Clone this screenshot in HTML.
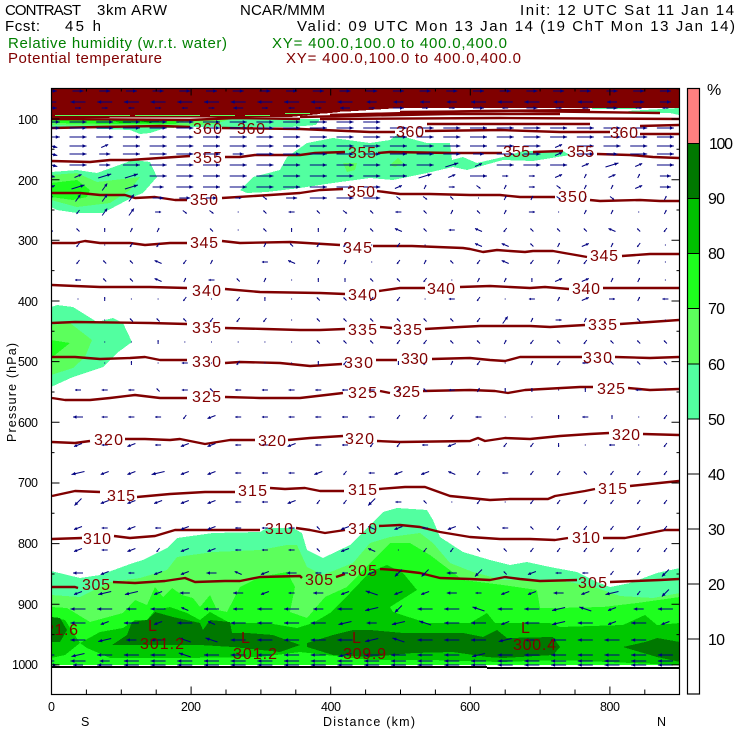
<!DOCTYPE html>
<html><head><meta charset="utf-8"><style>
html,body{margin:0;padding:0;background:#fff}
svg{display:block}
text{font-family:"Liberation Sans",sans-serif}
.h{font-size:15px;fill:#000}
.g{font-size:15px;fill:#008000}
.p{font-size:15px;fill:#800000}
.a{font-size:12.5px;fill:#000}
.c{font-size:16px;fill:#800000}
.b{font-size:16px;fill:#000}
polyline{fill:none;stroke:#800000;stroke-width:2.4;stroke-linejoin:round}
</style></head><body>
<svg width="740" height="740" viewBox="0 0 740 740" xmlns="http://www.w3.org/2000/svg">
<rect width="740" height="740" fill="#fff"/>
<text class="h" x="5" y="15" textLength="76">CONTRAST</text>
<text class="h" x="97" y="15" textLength="70">3km ARW</text>
<text class="h" x="240" y="15" textLength="85">NCAR/MMM</text>
<text class="h" x="520" y="15" textLength="214">Init: 12 UTC Sat 11 Jan 14</text>
<text class="h" x="5" y="31" textLength="35">Fcst:</text>
<text class="h" x="65" y="31" textLength="36">45 h</text>
<text class="h" x="297" y="31" textLength="438">Valid: 09 UTC Mon 13 Jan 14 (19 ChT Mon 13 Jan 14)</text>
<text class="g" x="8" y="48" textLength="219">Relative humidity (w.r.t. water)</text>
<text class="g" x="272" y="48" textLength="235">XY= 400.0,100.0 to 400.0,400.0</text>
<text class="p" x="8" y="63" textLength="154">Potential temperature</text>
<text class="p" x="286" y="63" textLength="235">XY= 400.0,100.0 to 400.0,400.0</text>

<defs><clipPath id="pl"><rect x="51" y="89" width="628" height="605"/></clipPath></defs>
<g clip-path="url(#pl)" shape-rendering="crispEdges">
<polygon fill="#52ffa0" points="51,571 80,578 100,575 133,563 143,560 167,548 177,538 213,533 260,532 267,528 293,528 302,533 307,550 323,558 350,545 370,525 383,512 397,508 427,510 433,520 440,537 463,552 490,560 510,565 527,562 550,567 577,572 597,582 610,587 630,583 657,573 680,568 680,665 51,665"/>
<polygon fill="#5cff5c" points="51,595 80,597 110,582 140,578 167,570 177,557 213,552 260,550 287,545 297,545 307,567 323,575 353,563 370,543 390,537 420,533 433,543 450,563 473,572 503,580 537,580 570,582 597,588 620,596 653,598 680,593 680,665 51,665"/>
<polygon fill="#1eff1e" points="51,607 67,608 90,622 123,613 135,600 147,605 155,587 163,597 172,588 182,595 193,598 200,607 210,595 217,610 227,612 240,587 260,577 287,572 295,587 290,612 307,618 325,597 347,587 370,563 390,543 410,543 430,555 463,580 503,585 537,590 540,608 557,608 603,607 637,603 680,597 680,665 51,665"/>
<polygon fill="#00c800" points="51,617 65,620 80,643 100,632 123,628 135,620 147,620 155,610 170,607 187,613 200,620 210,612 230,623 267,623 297,628 313,623 330,613 350,593 370,572 387,565 403,573 417,590 390,607 393,612 427,623 470,623 487,613 495,623 550,623 560,627 623,625 645,615 657,625 680,623 680,665 560,660 500,662 430,660 370,660 300,652 260,657 180,658 110,658 87,648 80,643 65,655 51,658"/>
<polygon fill="#007800" points="51,617 60,618 67,630 60,642 51,642"/>
<polygon fill="#007800" points="112,645 127,635 132,622 147,620 155,612 173,617 200,623 203,630 210,620 230,622 232,633 247,633 273,635 300,645 280,652 233,647 200,645 130,645"/>
<polygon fill="#007800" points="307,643 333,635 353,630 370,630 403,633 463,633 483,637 497,630 507,638 553,637 560,647 553,655 503,658 487,657 453,652 413,653 370,657 333,655 307,647"/>
<polygon fill="#007800" points="623,647 645,642 657,638 680,642 680,662 657,657 633,650"/>
<polygon fill="#52ffa0" points="51,307 57,305 73,307 97,322 113,318 123,323 132,342 117,353 103,367 73,377 51,387"/>
<polygon fill="#5cff5c" points="51,325 70,323 92,340 85,357 73,368 51,375"/>
<polygon fill="#1eff1e" points="51,340 70,343 55,355 51,358"/>
<polygon fill="#52ffa0" points="51,172 77,170 97,173 133,160 150,162 157,177 143,193 133,197 103,213 77,213 57,210 51,207"/>
<polygon fill="#5cff5c" points="51,175 77,173 97,182 140,177 130,190 110,203 77,207 51,200"/>
<polygon fill="#1eff1e" points="51,183 77,180 90,190 87,197 73,200 51,197"/>
<polygon fill="#52ffa0" points="240,190 253,177 280,170 287,157 307,143 333,138 370,143 390,140 397,135 427,143 450,143 452,160 463,157 477,163 503,157 523,151 563,151 570,155 533,161 503,160 467,170 453,167 427,173 393,180 370,178 333,183 300,188 267,192 247,193"/>
<polygon fill="#5cff5c" points="390,165 398,158 403,163 395,167"/>
<polygon fill="#5cff5c" points="343,163 357,163 355,170 347,172"/>
<polygon fill="#52ffa0" points="51,119 320,119 316,125 290,127 200,127 165,128 150,133 140,134 130,130 51,127"/>
<polygon fill="#5cff5c" points="51,119 230,119 215,124 180,126 110,126 51,125"/>
<polygon fill="#1eff1e" points="51,120 190,119 175,124 110,124 51,123"/>
<polygon fill="#00c800" points="110,120 170,120 165,122 120,123"/>
<polygon fill="#007800" points="140,121 160,121 150,123"/>
<rect x="592" y="107" width="45" height="2" fill="#52ffa0"/>
<polygon fill="#52ffa0" points="627,111 679,108 679,115 670,113 640,113"/>
<polygon fill="#800000" points="51,89 679,89 679,108 400,108 340,112 290,117 51,118"/>
<path d="M55 115.5H130M135 115.5H200M210 115.5H235M245 115.5H270M285 113.5H310" stroke="#5cff5c" stroke-width="1.4" fill="none"/>
<path d="M340 112H370M320 114H400M300 116.5H420" stroke="#fff" stroke-width="1" fill="none"/>
<g shape-rendering="auto">
<polyline points="52,119 190,120 235,118 300,119"/>
<polyline points="300,117 450,114 560,114"/>
<polyline points="330,115 480,111 590,110"/>
<polyline points="320,119 500,118 679,119"/>
<polyline points="400,112 520,111 660,113"/>
<polyline points="427,124 590,124"/>
<polyline points="52,128 100,127 160,126 190,127"/>
<polyline points="222,128 300,129 370,132 395,132"/>
<polyline points="425,131 500,130 560,132 610,132"/>
<polyline points="640,134 679,134"/>
<polyline points="640,126 679,125"/>
<polyline points="52,161 90,162 110,160 130,160 160,158 190,156"/>
<polyline points="225,157 240,157 255,155 300,155 315,153 345,152"/>
<polyline points="378,153 390,152 453,153 487,153 502,153"/>
<polyline points="533,152 563,151"/>
<polyline points="597,154 630,155 653,157 679,158"/>
<polyline points="52,193 80,193 100,195 125,195 135,198 155,197 175,200 187,200"/>
<polyline points="222,198 270,195 300,193 320,190 343,189"/>
<polyline points="377,191 400,194 430,194 470,195 500,195 520,197 555,197"/>
<polyline points="590,200 600,201 640,200 660,201 679,201"/>
<polyline points="52,243 75,243 85,241 100,243 130,243 145,245 170,243 187,243"/>
<polyline points="222,241 240,243 290,242 340,245"/>
<polyline points="373,246 412,246 463,248 470,249 483,252 497,250 510,251 525,252 533,251 553,251 570,254 587,257"/>
<polyline points="622,256 650,254 679,254"/>
<polyline points="52,285 75,286 100,287 150,287 187,288"/>
<polyline points="225,289 260,292 320,293 345,294"/>
<polyline points="379,291 400,288 425,288"/>
<polyline points="460,287 490,286 510,287 530,288 545,287 569,289"/>
<polyline points="603,288 630,288 679,288"/>
<polyline points="52,323 75,322 150,323 187,324"/>
<polyline points="225,328 265,329 300,330 320,330 345,329"/>
<polyline points="380,327 392,328"/>
<polyline points="425,329 460,327 480,326 530,326 550,327 585,325"/>
<polyline points="620,324 650,322 679,320"/>
<polyline points="52,357 75,357 100,359 130,358 145,357 160,360 187,360"/>
<polyline points="225,363 240,362 280,363 310,366 342,364"/>
<polyline points="376,360 397,360"/>
<polyline points="432,359 470,358 490,360 505,361 520,357 582,357"/>
<polyline points="615,357 650,358 679,357"/>
<polyline points="52,398 65,400 90,400 110,398 135,395 160,398 187,398"/>
<polyline points="225,397 260,398 300,398 343,393"/>
<polyline points="380,391 390,393"/>
<polyline points="423,391 470,390 495,391 508,393 525,390 580,387 593,387"/>
<polyline points="628,388 650,390 679,389"/>
<polyline points="52,442 75,443 90,441"/>
<polyline points="125,439 145,439 170,440 180,439 205,444 230,440 255,440"/>
<polyline points="288,440 310,438 343,436"/>
<polyline points="377,441 400,442 470,441 478,438 485,441 505,438 530,439 560,436 590,434 609,433"/>
<polyline points="643,434 679,435"/>
<polyline points="52,496 75,491 100,492"/>
<polyline points="137,497 170,494 205,492 235,492"/>
<polyline points="270,488 285,489 305,488 320,491 344,491"/>
<polyline points="379,489 405,487 425,487 450,496 470,498 490,500 510,499 530,499 548,499 555,496 585,491 595,489"/>
<polyline points="630,486 679,481"/>
<polyline points="52,539 82,538"/>
<polyline points="114,536 130,538 155,536 175,530 210,530 260,530"/>
<polyline points="296,528 310,530 325,533 345,530"/>
<polyline points="379,526 400,525 420,527 440,532 470,537 500,539 530,539 555,540 568,538"/>
<polyline points="603,538 625,538 650,533 665,530 679,530"/>
<polyline points="52,587 75,587 78,588"/>
<polyline points="113,582 135,583 165,581 185,578 195,582 225,581 240,581 260,577 300,576 302,578"/>
<polyline points="336,577 345,574"/>
<polyline points="380,569 395,570 420,573 440,578 470,579 490,580 505,577 520,579 540,581 577,580"/>
<polyline points="610,582 635,581 660,580 679,579"/>
</g>
<path id="ars" fill="none" stroke="#000080" stroke-width="1" shape-rendering="auto"/>
<path id="arh" fill="#000080" stroke="none" shape-rendering="auto"/>
</g>

<g>
<text class="c" x="193" y="134" textLength="29">360</text><text class="c" x="237" y="134" textLength="28">360</text><text class="c" x="396" y="137" textLength="28">360</text><text class="c" x="610" y="138" textLength="28">360</text>
<text class="c" x="193" y="163" textLength="29">355</text><text class="c" x="348" y="158" textLength="28">355</text><text class="c" x="503" y="157" textLength="27">355</text><text class="c" x="567" y="157" textLength="27">355</text>
<text class="c" x="190" y="205" textLength="28">350</text><text class="c" x="347" y="197" textLength="28">350</text><text class="c" x="558" y="202" textLength="29">350</text>
<text class="c" x="190" y="248" textLength="28">345</text><text class="c" x="343" y="253" textLength="29">345</text><text class="c" x="590" y="261" textLength="28">345</text>
<text class="c" x="192" y="296" textLength="29">340</text><text class="c" x="348" y="300" textLength="29">340</text><text class="c" x="427" y="294" textLength="28">340</text><text class="c" x="572" y="294" textLength="28">340</text>
<text class="c" x="192" y="333" textLength="29">335</text><text class="c" x="348" y="335" textLength="29">335</text><text class="c" x="393" y="335" textLength="29">335</text><text class="c" x="588" y="330" textLength="29">335</text>
<text class="c" x="192" y="367" textLength="29">330</text><text class="c" x="344" y="368" textLength="29">330</text><text class="c" x="401" y="364" textLength="27">330</text><text class="c" x="583" y="363" textLength="29">330</text>
<text class="c" x="192" y="402" textLength="29">325</text><text class="c" x="348" y="398" textLength="29">325</text><text class="c" x="393" y="397" textLength="27">325</text><text class="c" x="597" y="394" textLength="28">325</text>
<text class="c" x="94" y="445" textLength="29">320</text><text class="c" x="258" y="446" textLength="28">320</text><text class="c" x="345" y="444" textLength="29">320</text><text class="c" x="612" y="440" textLength="28">320</text>
<text class="c" x="107" y="501" textLength="28">315</text><text class="c" x="238" y="496" textLength="29">315</text><text class="c" x="348" y="495" textLength="29">315</text><text class="c" x="598" y="494" textLength="29">315</text>
<text class="c" x="83" y="544" textLength="28">310</text><text class="c" x="265" y="534" textLength="28">310</text><text class="c" x="348" y="534" textLength="29">310</text><text class="c" x="572" y="543" textLength="28">310</text>
<text class="c" x="82" y="590" textLength="28">305</text><text class="c" x="305" y="585" textLength="28">305</text><text class="c" x="348" y="576" textLength="29">305</text><text class="c" x="578" y="588" textLength="29">305</text>
<text class="c" x="148" y="631">L</text><text class="c" x="140" y="649" textLength="44">301.2</text>
<svg x="51" y="620" width="40" height="20"><text class="c" x="-6" y="15" textLength="33">21.6</text></svg>
<text class="c" x="241" y="643">L</text><text class="c" x="233" y="659" textLength="44">301.2</text>
<text class="c" x="352" y="643">L</text><text class="c" x="343" y="659" textLength="43">309.9</text>
<text class="c" x="521" y="633">L</text><text class="c" x="513" y="650" textLength="43">300.4</text>
</g>

<path d="M51 667H487M487 668H679" stroke="#000" stroke-width="2" fill="none"/>
<rect x="51.5" y="88.5" width="628" height="606" fill="none" stroke="#000" stroke-width="1.2"/>
<path id="tk" stroke="#000" stroke-width="1" fill="none"/>

<text class="a" x="18" y="124" textLength="20">100</text>
<text class="a" x="18" y="185" textLength="20">200</text>
<text class="a" x="18" y="245" textLength="20">300</text>
<text class="a" x="18" y="306" textLength="20">400</text>
<text class="a" x="18" y="366" textLength="20">500</text>
<text class="a" x="18" y="427" textLength="20">600</text>
<text class="a" x="18" y="487" textLength="20">700</text>
<text class="a" x="18" y="548" textLength="20">800</text>
<text class="a" x="18" y="609" textLength="20">900</text>
<text class="a" x="12" y="669" textLength="26">1000</text>
<text class="a" x="48" y="711" textLength="7">0</text>
<text class="a" x="181" y="711" textLength="20">200</text>
<text class="a" x="321" y="711" textLength="20">400</text>
<text class="a" x="460" y="711" textLength="20">600</text>
<text class="a" x="600" y="711" textLength="20">800</text>
<text class="a" x="81" y="726" textLength="8">S</text>
<text class="a" x="323" y="726" textLength="92">Distance (km)</text>
<text class="a" x="657" y="726" textLength="9">N</text>
<text class="a" transform="translate(16,442) rotate(-90)" textLength="99">Pressure (hPa)</text>

<rect x="687.5" y="88.5" width="12" height="55" fill="#ff8080"/>
<rect x="687.5" y="143.5" width="12" height="55" fill="#007800"/>
<rect x="687.5" y="198.5" width="12" height="55" fill="#00c000"/>
<rect x="687.5" y="253.5" width="12" height="55" fill="#1eff1e"/>
<rect x="687.5" y="308.5" width="12" height="55" fill="#5cff5c"/>
<rect x="687.5" y="364" width="12" height="55" fill="#52ffa0"/>
<path d="M687.5 143.5H699.5M687.5 198.5H699.5M687.5 253.5H699.5M687.5 308.5H699.5M687.5 364H699.5M687.5 419H699.5M687.5 474H699.5M687.5 529H699.5M687.5 584H699.5M687.5 639H699.5" stroke="#000" fill="none" stroke-width="1"/>
<rect x="687.5" y="88.5" width="12" height="605.5" fill="none" stroke="#000" stroke-width="1.2"/>
<text class="b" x="707" y="95" textLength="12">%</text>
<text class="b" x="709" y="149" textLength="24">100</text>
<text class="b" x="708" y="204" textLength="17">90</text>
<text class="b" x="708" y="259" textLength="17">80</text>
<text class="b" x="708" y="314" textLength="17">70</text>
<text class="b" x="708" y="370" textLength="17">60</text>
<text class="b" x="708" y="425" textLength="17">50</text>
<text class="b" x="708" y="480" textLength="17">40</text>
<text class="b" x="708" y="535" textLength="17">30</text>
<text class="b" x="708" y="590" textLength="17">20</text>
<text class="b" x="708" y="645" textLength="17">10</text>
</svg>
<script>
(function(){
var D={R:[17,0],r:[11,0],s:[6,0],L:[-15,0],l:[-10,0],k:[-6,0],A:[-13,3],a:[-8,3],B:[-7,7],b:[-3,4],C:[5,-7],c:[2,-4],D:[13,-4],d:[7,-3],E:[12,3],e:[7,2],F:[8,6],f:[4,3],G:[-12,-4],g:[-7,-3],H:[-6,-6],h:[-3,-3],n:[0,-4],t:[0,4],'.':[1,0]};
var rows=[
[91,"rrrrrrrrrrrrrrrrrrrrrrrr"],
[102,"lLLLLLLLLLLLllllLLLlLlrr"],
[108,"rsskskslskslsrssrkrskrsk"],
[122,"RRRRRRRRRRRRR           "],
[128,"RRRRRRRRRRRRRRRRRRRRRRRR"],
[137,"RRRRRRRRRRRRRRRRRRRRRRRR"],
[146,"ERdRRRRRRRRRRRRRRRRdRRRR"],
[154,"ERrRRRRrRRRRRRRRrRRdRrRR"],
[165,"ERrRRRRRRRRRRRRDdRRRdDdR"],
[176,"edDDRRRRRRRRRRDdRssdcdcr"],
[187,"dDCDrRRRRRRRRdcsfcsfccdr"],
[198,"cCCCrrrsfrRRRffh.ccfcf c"],
[212," bCCsff.hkhfhkhchcs.cc.c"],
[230,"hhncc h.hnnchghkgbhhhghb"],
[245," b.bb . chbb.b. gghcdcb."],
[262," bhhgbc kgcc.bchbgbcb c."],
[280," khhgckhc.nnhhb.ccnddcc."],
[299," .n..b.bn.hhbb.kb.kcdsck"],
[320,"  .hhhbbb.hhhhhhbCcsc.h."],
[342,"  ..n.....hhhbbhhcbhbhhh"],
[363,"  .n.k.b..nb.tbcb.cbkhhh"],
[390," kkkhkhkkkkkkbhkcnn.n.k."],
[417," lkkkbakkkkkkbbbk..nkn.b"],
[445," akakaakkakkbbka.bbt.k.b"],
[473," AaaAaakkkabkaagbkbbhbbb"],
[502," BaaaaakkabbBkh.b.bbbbbb"],
[528," akakaakkkhagakahkhbbbbb"],
[550," akabaakkkhag.bbhhbbbbbb"],
[573," lakaalgalkkaBBlBhakkbbB"],
[593," aAAalKlaklaGaalkaalaAbB"],
[609," LLlLgLlLLlLABLLGLLAGalLa"],
[623," LaLaLgLLLLAlAGLLaLALaLa"],
[640," LAlLGGLLLLLAGLLLALLLLL"],
[655,"kALLLGLLLLLALLLLALLLLLLL"],
[661,"kLlLLLLLLLLLLLLLLLLLLLLL"],
[665,"rlLLLLLLLLLLLLLLLLLLLLLL"]
];
var s='',h='';
rows.forEach(function(r){
 var y=r[0];
 r[1].split('').slice(0,24).forEach(function(c,i){
  var v=D[c]; if(!v)return;
  var x=51.3+26.7*i,dx=v[0],dy=v[1],L=Math.sqrt(dx*dx+dy*dy)||1;
  var x1=x-dx/2,y1=y-dy/2,x2=x+dx/2,y2=y+dy/2;
  s+='M'+x1.toFixed(1)+' '+y1.toFixed(1)+'L'+x2.toFixed(1)+' '+y2.toFixed(1);
  var hl=Math.min(4,L*0.35),w=Math.min(1.7,L*0.2);
  var ux=dx/L,uy=dy/L,bx=x2-ux*hl,by=y2-uy*hl;
  h+='M'+x2.toFixed(1)+' '+y2.toFixed(1)+'L'+(bx-uy*w).toFixed(1)+' '+(by+ux*w).toFixed(1)+'L'+(bx+uy*w).toFixed(1)+' '+(by-ux*w).toFixed(1)+'Z';
 });
});
document.getElementById('ars').setAttribute('d',s);
document.getElementById('arh').setAttribute('d',h);
var t='';
for(var k=-1;k<19;k++){var y=119+30.33*k;var m=(k%2===0);var l=m?8:3;t+='M51.5 '+y.toFixed(1)+'h'+l+'M679.5 '+y.toFixed(1)+'h-'+l;}
for(var k=1;k<18;k++){var x=51.5+34.9*k;var m=(k%4===0);t+='M'+x.toFixed(1)+' 88.5v'+(m?7:3)+'M'+x.toFixed(1)+' 694.5v-'+(m?8:5);}
document.getElementById('tk').setAttribute('d',t);
})();
</script>
</body></html>
